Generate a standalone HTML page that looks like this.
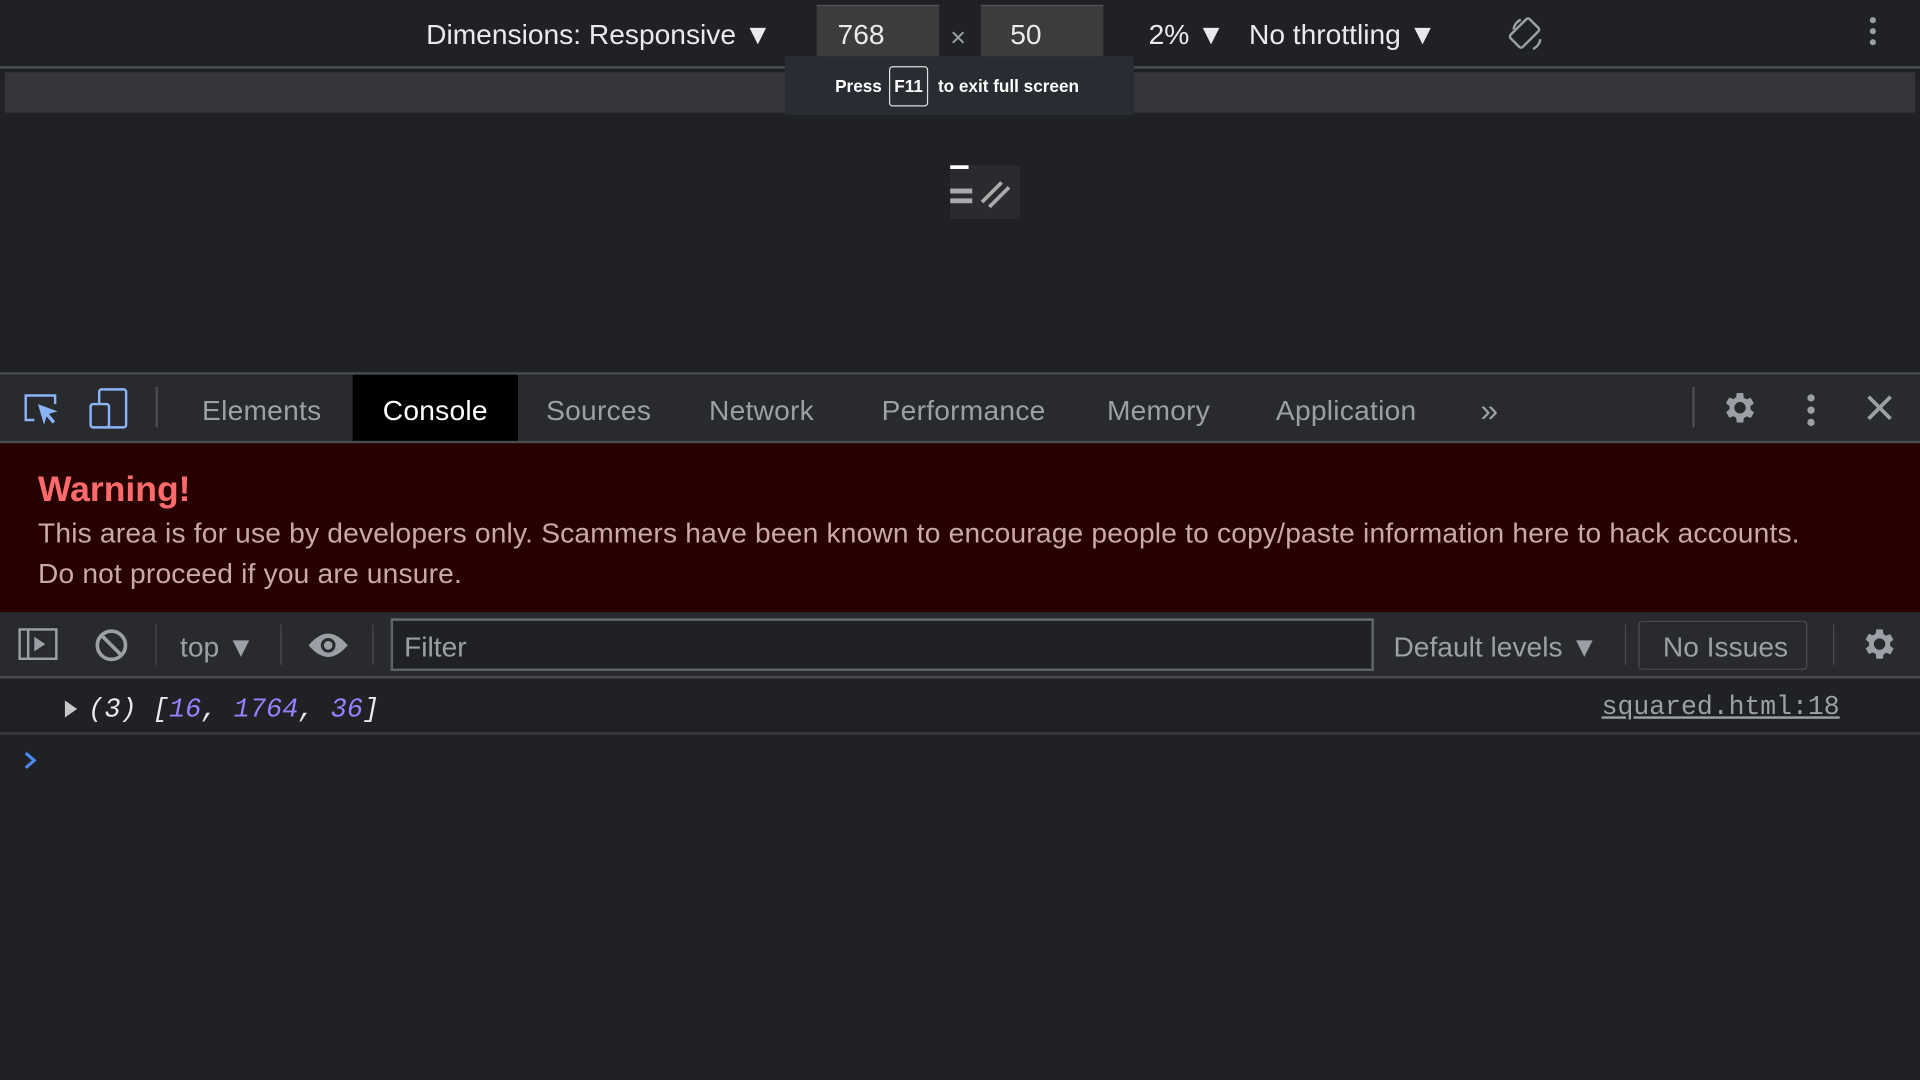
<!DOCTYPE html>
<html><head><meta charset="utf-8"><style>
html,body{margin:0;padding:0;width:1920px;height:1080px;overflow:hidden;background:#202124}
#w{position:absolute;left:0;top:0;width:1568px;height:882px;transform:scale(1.22449);transform-origin:0 0;font-family:"Liberation Sans",sans-serif;background:#202124}
.a{position:absolute;white-space:nowrap}
.t{color:#e8eaed;font-size:23px}
.tab{position:absolute;top:306px;height:54px;line-height:58px;font-size:23px;color:#9aa0a6;letter-spacing:0.2px}
</style></head><body><div id="w">
<!-- top bar -->
<div class="a" style="left:0;top:54px;width:1568px;height:2px;background:#494c50"></div>
<div class="a t" style="left:348px;top:15px">Dimensions: Responsive ▼</div>
<div class="a" style="left:667px;top:4px;width:100px;height:44px;background:#3c3c3c;border-top:1px solid #555"></div>
<div class="a t" style="left:684px;top:15px">768</div>
<div class="a" style="left:776px;top:18px;color:#9aa0a6;font-size:22px">×</div>
<div class="a" style="left:801px;top:4px;width:100px;height:44px;background:#3c3c3c;border-top:1px solid #555"></div>
<div class="a t" style="left:825px;top:15px">50</div>
<div class="a t" style="left:938px;top:15px">2% ▼</div>
<div class="a t" style="left:1020px;top:15px">No throttling ▼</div>
<svg class="a" style="left:1232px;top:12px" width="30" height="32" viewBox="0 0 30 32"><g fill="none" stroke="#9aa0a6" stroke-width="2"><rect x="6" y="4" width="14" height="22" rx="2" transform="rotate(45 13 15)"/><path d="M4 12a11 11 0 0 1 6-8M26 20a11 11 0 0 1-6 8"/></g></svg>
<div class="a" style="left:1527px;top:14px;width:6px">
<div style="width:5px;height:5px;border-radius:3px;background:#9aa0a6;margin-bottom:4px"></div><div style="width:5px;height:5px;border-radius:3px;background:#9aa0a6;margin-bottom:4px"></div><div style="width:5px;height:5px;border-radius:3px;background:#9aa0a6"></div></div>
<div class="a" style="left:4px;top:59px;width:1560px;height:33px;background:#35363a"></div>
<div class="a" style="left:641px;top:46px;width:285px;height:48px;background:#292c33"></div>
<div class="a" style="left:682px;top:62px;color:#fff;font-size:14px;font-weight:bold">Press</div>
<div class="a" style="left:726px;top:54px;width:30px;height:31px;border:1px solid #ddd;border-radius:3px;color:#fff;font-size:14px;font-weight:bold;line-height:31px;text-align:center">F11</div>
<div class="a" style="left:766px;top:62px;color:#fff;font-size:14px;font-weight:bold">to exit full screen</div>
<div class="a" style="left:776px;top:135px;width:57px;height:44px;background:#2a2b2e"></div>
<div class="a" style="left:776px;top:135px;width:15px;height:3px;background:#fff"></div>
<div class="a" style="left:776px;top:154px;width:18px;height:4px;background:#aaa"></div>
<div class="a" style="left:776px;top:162px;width:18px;height:4px;background:#aaa"></div>
<svg class="a" style="left:798px;top:143px" width="30" height="30"><path d="M4 22L20 6M10 26L26 10" stroke="#aaa" stroke-width="3"/></svg>
<!-- devtools tab bar -->
<div class="a" style="left:0;top:304px;width:1568px;height:2px;background:#494c50"></div>
<div class="a" style="left:0;top:306px;width:1568px;height:54px;background:#292a2d"></div>
<div class="a" style="left:0;top:360px;width:1568px;height:2px;background:#4a4c50"></div>
<svg class="a" style="left:18px;top:318px" width="34" height="34" viewBox="0 0 34 34"><path d="M10 25H3V5h24v7" fill="none" stroke="#8ab4f8" stroke-width="2"/><path d="M13 12l16 6-7 2 5 6-2 2-5-6-2 7z" fill="#8ab4f8"/></svg>
<svg class="a" style="left:72px;top:316px" width="36" height="36"><rect x="9" y="2" width="22" height="31" rx="2" fill="none" stroke="#8ab4f8" stroke-width="2"/><rect x="2" y="14" width="15" height="19" rx="2" fill="#292a2d" stroke="#8ab4f8" stroke-width="2"/></svg>
<div class="a" style="left:127px;top:316px;width:2px;height:33px;background:#4a4c50"></div>
<div class="tab" style="left:165px">Elements</div>
<div class="tab" style="left:288px;width:135px;background:#000;color:#fff;text-align:center">Console</div>
<div class="tab" style="left:446px">Sources</div>
<div class="tab" style="left:579px">Network</div>
<div class="tab" style="left:720px">Performance</div>
<div class="tab" style="left:904px">Memory</div>
<div class="tab" style="left:1042px">Application</div>
<div class="tab" style="left:1209px;font-size:26px">»</div>
<div class="a" style="left:1382px;top:316px;width:2px;height:33px;background:#4a4c50"></div>
<svg class="a" style="left:1405px;top:317px" width="32" height="32" viewBox="0 0 24 24"><path fill="#9aa0a6" d="M19.4 13a7.5 7.5 0 0 0 0-2l2.1-1.6-2-3.5-2.5 1a7.4 7.4 0 0 0-1.7-1L15 3h-4l-.4 2.7a7.4 7.4 0 0 0-1.7 1l-2.5-1-2 3.5L6.6 11a7.5 7.5 0 0 0 0 2l-2.1 1.6 2 3.5 2.5-1a7.4 7.4 0 0 0 1.7 1L11 21h4l.4-2.7a7.4 7.4 0 0 0 1.7-1l2.5 1 2-3.5zM13 15.5a3.5 3.5 0 1 1 0-7 3.5 3.5 0 0 1 0 7z" transform="translate(-1 0)"/></svg>
<div class="a" style="left:1476px;top:322px">
<div style="width:6px;height:6px;border-radius:3px;background:#9aa0a6;margin-bottom:4px"></div><div style="width:6px;height:6px;border-radius:3px;background:#9aa0a6;margin-bottom:4px"></div><div style="width:6px;height:6px;border-radius:3px;background:#9aa0a6"></div></div>
<svg class="a" style="left:1524px;top:322px" width="22" height="22"><path d="M2 2L20 20M20 2L2 20" stroke="#9aa0a6" stroke-width="3"/></svg>
<!-- warning -->
<div class="a" style="left:0;top:362px;width:1568px;height:138px;background:#290000"></div>
<div class="a" style="left:31px;top:384px;color:#ff6b6b;font-size:29px;font-weight:bold">Warning!</div>
<div class="a" style="left:31px;top:419px;color:#c9aaaa;font-size:23px;letter-spacing:0.15px;line-height:33px">This area is for use by developers only. Scammers have been known to encourage people to copy/paste information here to hack accounts.<br>Do not proceed if you are unsure.</div>
<!-- console toolbar -->
<div class="a" style="left:0;top:500px;width:1568px;height:53px;background:#292a2d"></div>
<div class="a" style="left:0;top:552px;width:1568px;height:2px;background:#4a4c50"></div>
<svg class="a" style="left:15px;top:513px" width="34" height="28"><rect x="1" y="1" width="30" height="24" fill="none" stroke="#9aa0a6" stroke-width="2"/><path d="M8 1v24" stroke="#9aa0a6" stroke-width="2"/><path d="M13 7l9 6-9 6z" fill="#9aa0a6"/></svg>
<svg class="a" style="left:76px;top:512px" width="30" height="30"><circle cx="15" cy="15" r="11.5" fill="none" stroke="#9aa0a6" stroke-width="3"/><path d="M7 7L23 23" stroke="#9aa0a6" stroke-width="3"/></svg>
<div class="a" style="left:127px;top:510px;width:1px;height:33px;background:#4a4c50"></div>
<div class="a" style="left:147px;top:515px;color:#9aa0a6;font-size:23px">top ▼</div>
<div class="a" style="left:229px;top:510px;width:1px;height:33px;background:#4a4c50"></div>
<svg class="a" style="left:250px;top:514px" width="36" height="26"><path d="M2 13Q18-6 34 13Q18 32 2 13z" fill="#9aa0a6"/><circle cx="18" cy="13" r="6" fill="#292a2d"/><circle cx="18" cy="13" r="3.5" fill="#9aa0a6"/></svg>
<div class="a" style="left:304px;top:510px;width:1px;height:33px;background:#4a4c50"></div>
<div class="a" style="left:319px;top:505px;width:799px;height:39px;background:#202124;border:2px solid #5f6368;border-top-color:#6a6d70"></div>
<div class="a" style="left:330px;top:515px;color:#9aa0a6;font-size:23px">Filter</div>
<div class="a" style="left:1138px;top:515px;color:#9aa0a6;font-size:23px">Default levels ▼</div>
<div class="a" style="left:1327px;top:510px;width:1px;height:33px;background:#4a4c50"></div>
<div class="a" style="left:1338px;top:507px;width:136px;height:38px;border:1px solid #4a4c50;border-radius:3px"></div>
<div class="a" style="left:1358px;top:515px;color:#9aa0a6;font-size:23px">No Issues</div>
<div class="a" style="left:1497px;top:510px;width:1px;height:33px;background:#4a4c50"></div>
<svg class="a" style="left:1519px;top:510px" width="32" height="32" viewBox="0 0 24 24"><path fill="#9aa0a6" d="M19.4 13a7.5 7.5 0 0 0 0-2l2.1-1.6-2-3.5-2.5 1a7.4 7.4 0 0 0-1.7-1L15 3h-4l-.4 2.7a7.4 7.4 0 0 0-1.7 1l-2.5-1-2 3.5L6.6 11a7.5 7.5 0 0 0 0 2l-2.1 1.6 2 3.5 2.5-1a7.4 7.4 0 0 0 1.7 1L11 21h4l.4-2.7a7.4 7.4 0 0 0 1.7-1l2.5 1 2-3.5zM13 15.5a3.5 3.5 0 1 1 0-7 3.5 3.5 0 0 1 0 7z" transform="translate(-1 0)"/></svg>
<!-- log -->
<div class="a" style="left:0;top:598px;width:1568px;height:2px;background:#3a3b3e"></div>
<svg class="a" style="left:52px;top:571px" width="12" height="16"><path d="M1 1l10 7-10 7z" fill="#c4c7c5"/></svg>
<div class="a" style="left:72px;top:567px;font-family:'Liberation Mono',monospace;font-style:italic;font-size:22px;color:#e8eaed">(3) [<span style="color:#9980ff">16</span>, <span style="color:#9980ff">1764</span>, <span style="color:#9980ff">36</span>]</div>
<div class="a" style="left:1308px;top:566px;font-family:'Liberation Mono',monospace;font-size:21.6px;color:#9aa0a6;text-decoration:underline">squared.html:18</div>
<svg class="a" style="left:18px;top:612px" width="14" height="18"><path d="M3 3l7 6-7 6" fill="none" stroke="#4c8bf5" stroke-width="2.5"/></svg>
</div></body></html>
